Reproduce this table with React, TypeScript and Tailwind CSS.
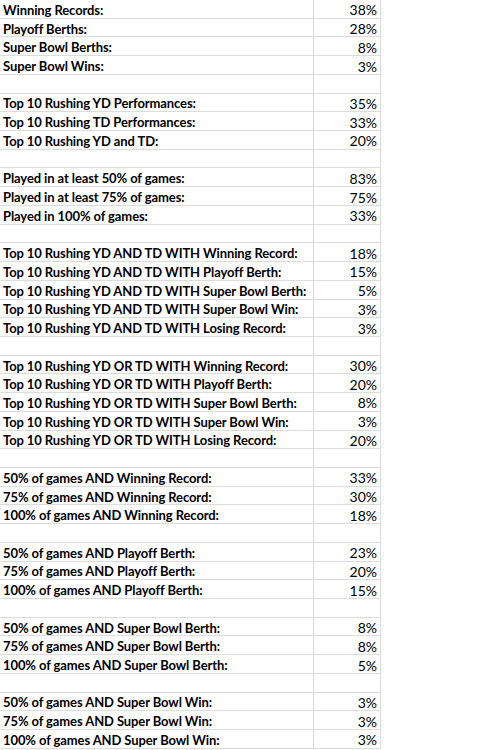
const rows: ([string, string] | null)[] = [
  ['Winning Records:', '38%'],
  ['Playoff Berths:', '28%'],
  ['Super Bowl Berths:', '8%'],
  ['Super Bowl Wins:', '3%'],
  null,
  ['Top 10 Rushing YD Performances:', '35%'],
  ['Top 10 Rushing TD Performances:', '33%'],
  ['Top 10 Rushing YD and TD:', '20%'],
  null,
  ['Played in at least 50% of games:', '83%'],
  ['Played in at least 75% of games:', '75%'],
  ['Played in 100% of games:', '33%'],
  null,
  ['Top 10 Rushing YD AND TD WITH Winning Record:', '18%'],
  ['Top 10 Rushing YD AND TD WITH Playoff Berth:', '15%'],
  ['Top 10 Rushing YD AND TD WITH Super Bowl Berth:', '5%'],
  ['Top 10 Rushing YD AND TD WITH Super Bowl Win:', '3%'],
  ['Top 10 Rushing YD AND TD WITH Losing Record:', '3%'],
  null,
  ['Top 10 Rushing YD OR TD WITH Winning Record:', '30%'],
  ['Top 10 Rushing YD OR TD WITH Playoff Berth:', '20%'],
  ['Top 10 Rushing YD OR TD WITH Super Bowl Berth:', '8%'],
  ['Top 10 Rushing YD OR TD WITH Super Bowl Win:', '3%'],
  ['Top 10 Rushing YD OR TD WITH Losing Record:', '20%'],
  null,
  ['50% of games AND Winning Record:', '33%'],
  ['75% of games AND Winning Record:', '30%'],
  ['100% of games AND Winning Record:', '18%'],
  null,
  ['50% of games AND Playoff Berth:', '23%'],
  ['75% of games AND Playoff Berth:', '20%'],
  ['100% of games AND Playoff Berth:', '15%'],
  null,
  ['50% of games AND Super Bowl Berth:', '8%'],
  ['75% of games AND Super Bowl Berth:', '8%'],
  ['100% of games AND Super Bowl Berth:', '5%'],
  null,
  ['50% of games AND Super Bowl Win:', '3%'],
  ['75% of games AND Super Bowl Win:', '3%'],
  ['100% of games AND Super Bowl Win:', '3%'],
];

export default function App() {
  return (
    <div className="h-[750px] w-[498px] overflow-hidden bg-white font-['Lato','Liberation_Sans',sans-serif] text-black">
      {rows.map((row, i) => (
        <div key={i} className="flex h-[18.72px] w-[381px] border-b border-[#dcdcdc]">
          <div className="flex w-[314px] shrink-0 items-center border-r border-[#d6d6d6] pt-[3px] pl-[3px] text-[13px] font-bold leading-none tracking-[-0.1px] whitespace-nowrap">
            {row ? row[0] : ''}
          </div>
          <div className="flex w-[67px] shrink-0 items-center justify-end border-r border-[#dcdcdc] pt-[3px] pr-[3px] text-[14px] leading-none">
            {row ? row[1] : ''}
          </div>
        </div>
      ))}
    </div>
  );
}
